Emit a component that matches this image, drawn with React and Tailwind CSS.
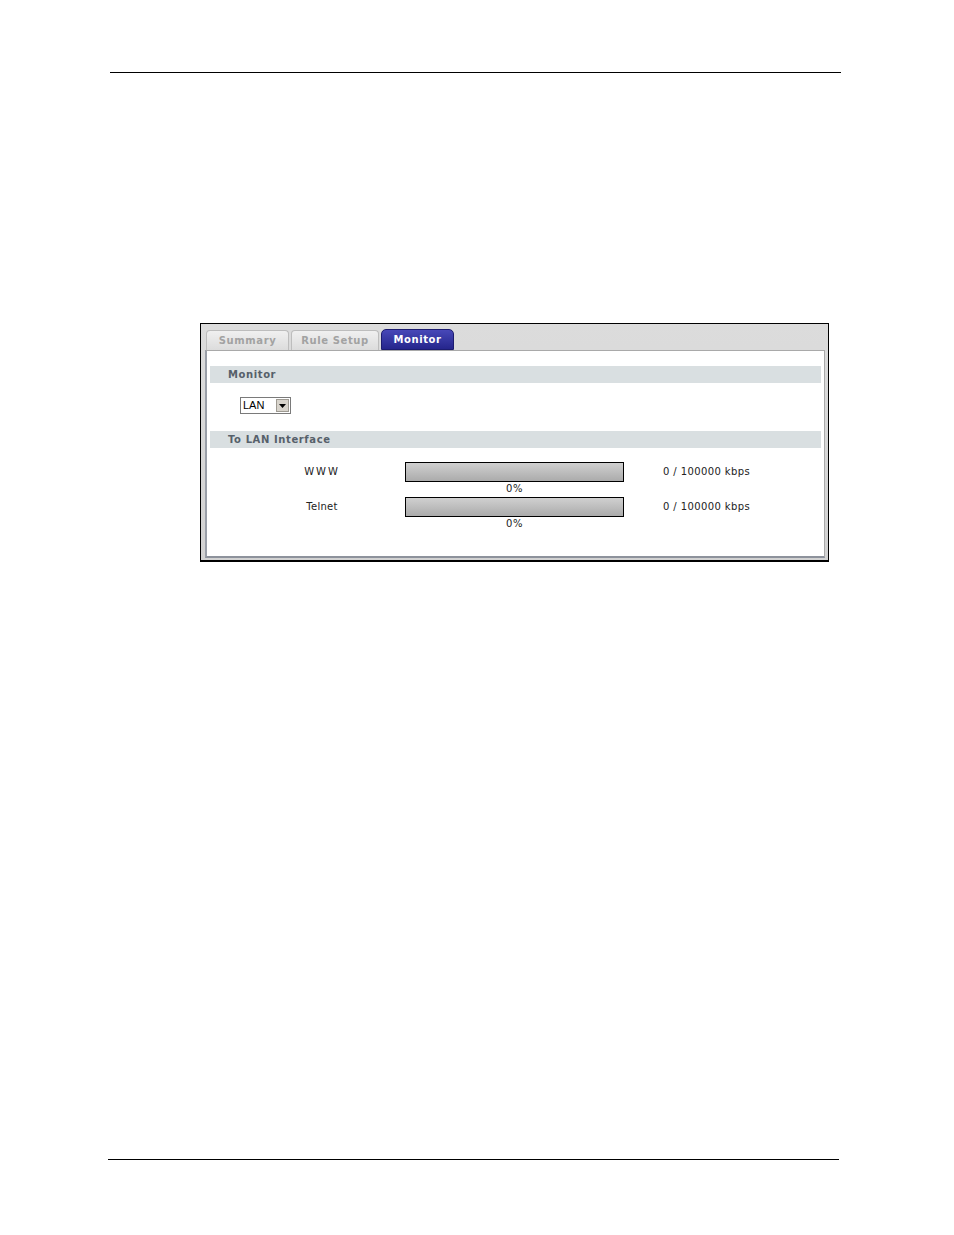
import React from 'react';

const tabs = [
  { label: 'Summary', width: 'w-[83px]' },
  { label: 'Rule Setup', width: 'w-[88px]' },
  { label: 'Monitor', width: 'w-[73px]', active: true },
];

const rows = [
  { name: 'WWW', spaced: true },
  { name: 'Telnet' },
];

const SectionBar = ({ title }) => (
  <div className="mx-[3px] h-[17px] bg-[#d9dfe1] flex items-center pl-[18px] text-[10px] font-bold tracking-[0.6px] text-[#56606a]">
    {title}
  </div>
);

const UsageRow = ({ name, spaced }) => (
  <div className="flex h-[35px]">
    <div
      className={`w-[198px] pl-[32px] text-center text-[10px] text-[#222] leading-[20px] ${
        spaced ? 'tracking-[2px]' : 'tracking-[0.3px]'
      }`}
    >
      {name}
    </div>
    <div className="w-[219px] flex flex-col">
      <div className="h-[20px] border border-black bg-gradient-to-b from-[#d0d0d0] to-[#ababab]" />
      <div className="text-center text-[10px] leading-[14px] text-[#222] tracking-[0.5px]">0%</div>
    </div>
    <div className="pl-[39px] text-[10px] leading-[20px] text-[#222] tracking-[0.4px]">
      0 / 100000 kbps
    </div>
  </div>
);

export default function App() {
  return (
    <div className="w-[954px] h-[1235px] bg-white flex flex-col font-['DejaVu_Sans',sans-serif]">
      {/* header rule */}
      <div className="mt-[72px] ml-[110px] w-[731px] h-[1px] bg-black" />

      {/* screenshot frame */}
      <div className="mt-[250px] ml-[200px] w-[629px] h-[239px] border border-black border-b-2 bg-gradient-to-b from-[#dcdcdc] to-[#d2d2d2] pt-[5px] pl-[4px] pr-[3px]">
        <div className="flex h-[21px] items-end gap-[2px] pl-[1px]">
          {tabs.map((t) =>
            t.active ? (
              <div
                key={t.label}
                className={`${t.width} h-[21px] rounded-t-[5px] border border-[#1c1c70] bg-gradient-to-b from-[#4848b8] to-[#25258c] text-white text-[10px] font-bold tracking-[0.6px] flex items-center justify-center`}
              >
                {t.label}
              </div>
            ) : (
              <div
                key={t.label}
                className={`${t.width} h-[20px] rounded-t-[4px] border border-[#bdbdbd] border-b-0 bg-gradient-to-b from-[#f0f0f0] to-[#dcdcdc] text-[#a2a2a2] text-[10px] font-bold tracking-[0.6px] flex items-center justify-center`}
              >
                {t.label}
              </div>
            )
          )}
        </div>

        {/* panel */}
        <div className="h-[208px] bg-white border border-[#a9a9a9] border-l-[#9a9fa8] border-b-[#8d929c] border-l-2 border-b-2 pt-[15px]">
          <SectionBar title="Monitor" />

          <div className="h-[48px] flex items-start pt-[14px] pl-[33px]">
            <div className="w-[51px] h-[17px] border border-[#7a7a7a] flex items-center bg-white">
              <span className="flex-1 pl-[2px] text-[11px] leading-none text-black font-['Liberation_Sans',sans-serif]">
                LAN
              </span>
              <div className="w-[13px] h-[13px] mr-[1px] bg-[#d8d4cc] border border-[#9e9a92] flex items-center justify-center">
                <svg width="7" height="4" viewBox="0 0 7 4">
                  <path d="M0 0h7L3.5 4z" fill="#000" />
                </svg>
              </div>
            </div>
          </div>

          <SectionBar title="To LAN Interface" />

          <div className="pt-[14px]">
            {rows.map((r) => (
              <UsageRow key={r.name} {...r} />
            ))}
          </div>
        </div>
      </div>

      {/* footer rule */}
      <div className="mt-[597px] ml-[108px] w-[731px] h-[1px] bg-black" />
    </div>
  );
}
